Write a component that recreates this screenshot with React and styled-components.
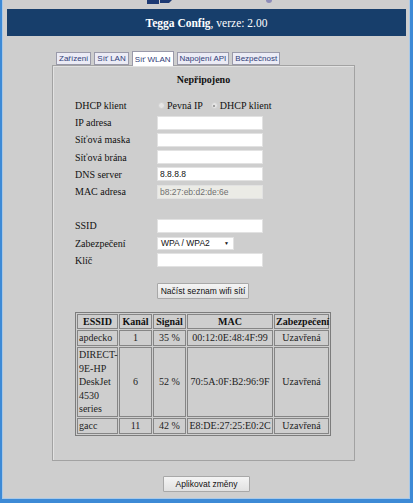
import React from "react";
import styled, { createGlobalStyle } from "styled-components";

const GlobalStyle = createGlobalStyle`
  html, body {
    margin: 0;
    padding: 0;
    background: #cecece;
  }
  * {
    box-sizing: border-box;
  }
`;

const networks = [
  { essid: "apdecko", channel: "1", signal: "35 %", mac: "00:12:0E:48:4F:99", sec: "Uzavřená" },
  { essid: "DIRECT-9E-HP DeskJet 4530 series", channel: "6", signal: "52 %", mac: "70:5A:0F:B2:96:9F", sec: "Uzavřená" },
  { essid: "gacc", channel: "11", signal: "42 %", mac: "E8:DE:27:25:E0:2C", sec: "Uzavřená" },
];

const tabs = ["Zařízení", "Síť LAN", "Síť WLAN", "Napojení API", "Bezpečnost"];

function Logo() {
  return (
    <svg width="135" height="5" viewBox="0 0 135 5">
      <path d="M2 0 H14 V4 H2 Z" fill="#1d3a73" />
      <path d="M15 0 H27 L24 3 H15 Z" fill="#1d3a73" />
      <circle cx="124" cy="0" r="3" fill="#8c8cb8" />
    </svg>
  );
}

function App() {
  return (
    <Window>
      <GlobalStyle />
      <LogoStrip>
        <Logo />
      </LogoStrip>
      <Header>
        <b>Tegga Config</b>, verze: 2.00
      </Header>
      <Main>
        <TabRow>
          {tabs.map((t) => (
            <Tab key={t} $active={t === "Síť WLAN"}>
              {t}
            </Tab>
          ))}
        </TabRow>
        <Panel>
          <Status>Nepřipojeno</Status>
          <Form>
            <Label>DHCP klient</Label>
            <RadioGroup>
              <RadioLabel>
                <Radio type="radio" name="dhcp" readOnly />
                Pevná IP
              </RadioLabel>
              <RadioLabel>
                <Radio type="radio" name="dhcp" defaultChecked />
                DHCP klient
              </RadioLabel>
            </RadioGroup>
            <Label>IP adresa</Label>
            <Field><Input /></Field>
            <Label>Síťová maska</Label>
            <Field><Input /></Field>
            <Label>Síťová brána</Label>
            <Field><Input /></Field>
            <Label>DNS server</Label>
            <Field><Input defaultValue="8.8.8.8" /></Field>
            <Label>MAC adresa</Label>
            <Field><Input defaultValue="b8:27:eb:d2:de:6e" disabled /></Field>
            <Spacer />
            <Label>SSID</Label>
            <Field><Input /></Field>
            <Label>Zabezpečení</Label>
            <Field>
              <Select>
                <span>WPA / WPA2</span>
                <Arrow>▼</Arrow>
              </Select>
            </Field>
            <Label>Klíč</Label>
            <Field><Input /></Field>
          </Form>
          <ScanRow>
            <Button $width={92}>Načíst seznam wifi sítí</Button>
          </ScanRow>
          <Table>
            <thead>
              <tr>
                <Th $w={41}>ESSID</Th>
                <Th $w={33}>Kanál</Th>
                <Th $w={33}>Signál</Th>
                <Th $w={86}>MAC</Th>
                <Th $w={55}>Zabezpečení</Th>
              </tr>
            </thead>
            <tbody>
              {networks.map((n) => (
                <tr key={n.mac}>
                  <Td $left>{n.essid}</Td>
                  <Td>{n.channel}</Td>
                  <Td>{n.signal}</Td>
                  <Td>{n.mac}</Td>
                  <Td>{n.sec}</Td>
                </tr>
              ))}
            </tbody>
          </Table>
        </Panel>
        <ApplyRow>
          <Button $width={87}>Aplikovat změny</Button>
        </ApplyRow>
      </Main>
    </Window>
  );
}

const Window = styled.div`
  min-height: 503px;
  display: flex;
  flex-direction: column;
  border-left: 2px solid #3d8ad6;
  border-right: 3px solid #3d8ad6;
  border-bottom: 4px solid #3d8ad6;
  box-shadow: inset 1px 0 0 #a9c9e8, inset -1px 0 0 #a9c9e8, inset 0 -1px 0 #a9c9e8;
  font-family: "Liberation Serif", "Times New Roman", serif;
  color: #111;
`;

const LogoStrip = styled.div`
  height: 9px;
  display: flex;
  padding-left: 143px;
`;

const Header = styled.div`
  height: 27px;
  margin: 0 4px 0 5px;
  background: #173e6b;
  color: #fff;
  font-size: 11.5px;
  display: flex;
  align-items: center;
  justify-content: center;
  white-space: pre;
`;

const Main = styled.div`
  padding: 16px 0 0 50px;
  display: flex;
  flex-direction: column;
`;

const TabRow = styled.div`
  display: flex;
  gap: 3px;
  padding-left: 4px;
  position: relative;
  z-index: 1;
`;

const Tab = styled.div`
  height: ${(p) => (p.$active ? "15px" : "13px")};
  margin-top: ${(p) => (p.$active ? "-1px" : "0")};
  margin-bottom: ${(p) => (p.$active ? "-1px" : "0")};
  padding: 0 2px;
  display: flex;
  align-items: center;
  font-family: "Liberation Sans", Arial, sans-serif;
  font-size: 8px;
  color: #2f3c78;
  background: ${(p) => (p.$active ? "#ffffff" : "#ebebf5")};
  border: 1px solid #9a9aaa;
  border-bottom: ${(p) => (p.$active ? "none" : "1px solid #9a9aaa")};
`;

const Panel = styled.div`
  width: 303px;
  border: 1px solid #a2a2a2;
  box-shadow: inset 1px 1px 0 #e2e2e2;
  padding: 7px 0 24px 22px;
  display: flex;
  flex-direction: column;
`;

const Status = styled.div`
  font-weight: bold;
  font-size: 10px;
  line-height: 14px;
  text-align: center;
  padding-right: 22px;
`;

const Form = styled.div`
  margin-top: 10px;
  display: grid;
  grid-template-columns: 82px 130px;
  grid-auto-rows: 17.2px;
  align-items: center;
`;

const Label = styled.div`
  font-size: 10px;
`;

const Field = styled.div`
  display: flex;
  align-items: center;
`;

const Spacer = styled.div`
  grid-column: 1 / span 2;
`;

const Input = styled.input`
  width: 106px;
  height: 14px;
  padding: 0 2px;
  border: 1px solid #e2e2e2;
  background: #fff;
  font-family: "Liberation Sans", Arial, sans-serif;
  font-size: 8.5px;
  color: #111;
  outline: none;
  &:disabled {
    background: #ebebe6;
    color: #707070;
  }
`;

const RadioGroup = styled.div`
  display: flex;
  gap: 8px;
  font-size: 10px;
  margin-left: 1px;
  white-space: nowrap;
`;

const RadioLabel = styled.label`
  display: flex;
  align-items: center;
  gap: 2px;
`;

const Radio = styled.input`
  appearance: none;
  margin: 0;
  width: 7px;
  height: 7px;
  border-radius: 50%;
  background: #e4e4e4;
  border: 1px solid #d0d0d0;
  position: relative;
  &:checked::after {
    content: "";
    position: absolute;
    left: 1.5px;
    top: 1.5px;
    width: 2px;
    height: 2px;
    border-radius: 50%;
    background: #8a8a8a;
  }
`;

const Select = styled.div`
  width: 77px;
  height: 13px;
  background: #fff;
  border: 1px solid #e2e2e2;
  padding: 0 4px 0 3px;
  display: flex;
  align-items: center;
  justify-content: space-between;
  font-family: "Liberation Sans", Arial, sans-serif;
  font-size: 8.5px;
`;

const Arrow = styled.span`
  font-size: 5px;
`;

const ScanRow = styled.div`
  margin-top: 14px;
  padding-left: 82px;
  display: flex;
`;

const Button = styled.button`
  width: ${(p) => p.$width}px;
  height: 16px;
  padding: 0;
  background: linear-gradient(#f4f4f4, #e1e1e1);
  border: 1px solid #a8a8a8;
  border-radius: 1px;
  font-family: "Liberation Sans", Arial, sans-serif;
  font-size: 8.5px;
  color: #111;
`;

const Table = styled.table`
  margin-top: 13px;
  width: 256px;
  table-layout: fixed;
  border-collapse: separate;
  border-spacing: 1px;
  border: 1px solid #7c7c7c;
  font-size: 10px;
  line-height: 13.6px;
`;

const Th = styled.th`
  width: ${(p) => p.$w}px;
  box-sizing: border-box;
  padding: 0 1px;
  border: 1px solid #858585;
  font-weight: bold;
  white-space: nowrap;
`;

const Td = styled.td`
  padding: 0 1px;
  border: 1px solid #858585;
  text-align: ${(p) => (p.$left ? "left" : "center")};
  vertical-align: middle;
  color: #222;
`;

const ApplyRow = styled.div`
  margin-top: 15px;
  display: flex;
  justify-content: center;
  padding-right: 49px;
`;

export default App;
